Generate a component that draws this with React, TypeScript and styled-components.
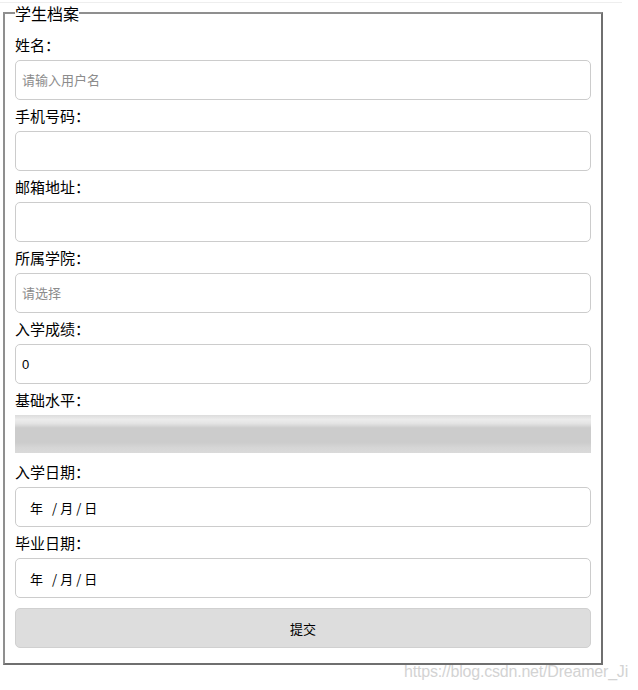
import styled, { createGlobalStyle } from "styled-components";

const GlobalStyle = createGlobalStyle`
  body {
    margin: 0;
    background: #fff;
    font-family: "Liberation Sans", "Noto Sans CJK SC", sans-serif;
    color: #000;
  }
`;

const Page = styled.div`
  position: relative;
  width: 638px;
  height: 690px;
  overflow: hidden;
`;

const TopRule = styled.div`
  height: 1px;
  margin: 2px 16px 0 0;
  background: #eeeeee;
`;

const Fieldset = styled.fieldset`
  box-sizing: border-box;
  width: 600px;
  margin: 0 0 0 3px;
  padding: 11px 10px 10px;
  border: 2px solid #8a8a8a;
  border-color: #8f8f8f #6f6f6f #6f6f6f #8f8f8f;
  display: flex;
  flex-direction: column;
`;

const Legend = styled.legend`
  padding: 0;
  margin-left: 0;
  font-family: "Noto Sans CJK SC", sans-serif;
  font-size: 16px;
  line-height: 20px;
`;

const Label = styled.label`
  display: block;
  font-family: "Noto Sans CJK SC", sans-serif;
  font-size: 15px;
  line-height: 21px;
  margin-bottom: 5px;
`;

const TextInput = styled.input`
  box-sizing: border-box;
  width: 100%;
  height: 40px;
  margin: 0 0 5px;
  padding: 0 6px;
  border: 1px solid #cccccc;
  border-radius: 5px;
  font-family: "Liberation Sans", "Noto Sans CJK SC", sans-serif;
  font-size: 13px;
  color: #000;
  outline: none;
  background: #fff;

  &::placeholder {
    color: #8c8c8c;
  }
`;

const LevelBar = styled.div`
  height: 38px;
  margin: 0 0 8px;
  background: linear-gradient(
    to bottom,
    #dcdcdc 0%,
    #ececec 12%,
    #e4e4e4 22%,
    #cccccc 34%,
    #cccccc 72%,
    #d6d6d6 86%,
    #dadada 100%
  );
`;

const DateField = styled.div`
  box-sizing: border-box;
  height: 40px;
  margin: 0 0 5px;
  padding: 0 14px;
  display: flex;
  align-items: center;
  border: 1px solid #cccccc;
  border-radius: 5px;
  font-family: "Noto Sans CJK SC", sans-serif;
  font-size: 13px;
`;

const DatePart = styled.span<{ $gap: number }>`
  margin-right: ${(p) => p.$gap}px;
`;

const SubmitButton = styled.button`
  box-sizing: border-box;
  height: 40px;
  margin: 5px 0 5px;
  border: 1px solid #d0d0d0;
  border-radius: 5px;
  background: #dddddd;
  font-family: "Noto Sans CJK SC", sans-serif;
  font-size: 13px;
  color: #000;
`;

const Watermark = styled.div`
  position: absolute;
  right: 10px;
  top: 663px;
  font-family: "Liberation Sans", sans-serif;
  font-size: 16px;
  color: #d3d3d3;
  letter-spacing: -0.2px;
`;

const fields = [
  { label: "姓名：", placeholder: "请输入用户名" },
  { label: "手机号码：" },
  { label: "邮箱地址：" },
  { label: "所属学院：", placeholder: "请选择" },
  { label: "入学成绩：", value: "0" },
];

function DateValue() {
  return (
    <DateField>
      <DatePart $gap={9}>年</DatePart>
      <DatePart $gap={3}>/</DatePart>
      <DatePart $gap={3}>月</DatePart>
      <DatePart $gap={3}>/</DatePart>
      <DatePart $gap={0}>日</DatePart>
    </DateField>
  );
}

export default function App() {
  return (
    <Page>
      <GlobalStyle />
      <TopRule />
      <Fieldset>
        <Legend>学生档案</Legend>
        {fields.map((f) => (
          <div key={f.label}>
            <Label>{f.label}</Label>
            <TextInput placeholder={f.placeholder} defaultValue={f.value} />
          </div>
        ))}
        <Label>基础水平：</Label>
        <LevelBar />
        <Label>入学日期：</Label>
        <DateValue />
        <Label>毕业日期：</Label>
        <DateValue />
        <SubmitButton type="button">提交</SubmitButton>
      </Fieldset>
      <Watermark>https://blog.csdn.net/Dreamer_Ji</Watermark>
    </Page>
  );
}
